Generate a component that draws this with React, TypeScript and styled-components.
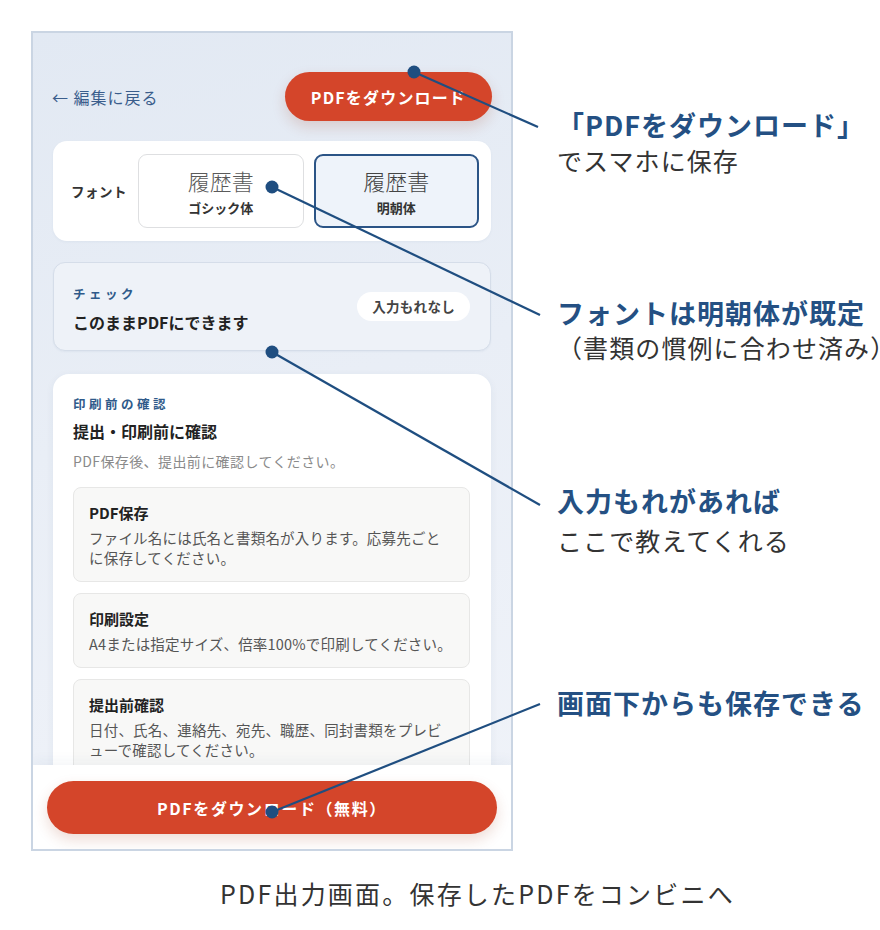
import React from 'react';
import styled, { createGlobalStyle } from 'styled-components';

const GlobalStyle = createGlobalStyle`
  body {
    margin: 0;
    background: #fff;
    font-family: 'Noto Sans CJK JP', 'Noto Sans', sans-serif;
  }
  * {
    box-sizing: border-box;
  }
`;

const RED = '#d4452a';
const NAVY = '#1f4e80';

const Page = styled.div`
  position: relative;
  width: 880px;
  height: 930px;
  padding-top: 31px;
  overflow: hidden;
  background: #fff;
`;

const TopRow = styled.div`
  display: flex;
  padding-left: 31px;
  gap: 44px;
`;

const Phone = styled.div`
  flex: none;
  width: 482px;
  height: 820px;
  border: 2px solid #cad5e3;
  display: flex;
  flex-direction: column;
  overflow: hidden;
  background: linear-gradient(165deg, #e2e9f3 0%, #e9eef6 45%, #f0f3f9 100%);
`;

const Scroll = styled.div`
  flex: 1;
  overflow: hidden;
  padding: 39px 20px 0;
`;

const Header = styled.div`
  display: flex;
  align-items: center;
  justify-content: space-between;
  height: 49px;
  margin-bottom: 20px;
`;

const BackLink = styled.a`
  color: #3a5d8c;
  font-size: 16px;
  letter-spacing: 1px;
  text-decoration: none;
  margin-left: -1px;
`;

const PillButton = styled.button<{ $wide?: boolean }>`
  border: none;
  border-radius: 999px;
  background: ${RED};
  color: #fff;
  font-family: inherit;
  font-weight: 700;
  font-size: 16px;
  letter-spacing: ${(p) => (p.$wide ? '1.6px' : '1.2px')};
  height: ${(p) => (p.$wide ? '53px' : '49px')};
  width: ${(p) => (p.$wide ? '100%' : '207px')};
  margin-right: ${(p) => (p.$wide ? '0' : '-1px')};
  box-shadow: 0 6px 14px rgba(160, 60, 30, 0.18);
`;

const FontCard = styled.div`
  display: grid;
  grid-template-columns: auto 1fr 1fr;
  align-items: center;
  column-gap: 10px;
  background: #fff;
  border-radius: 14px;
  padding: 13px 12px 13px 18px;
  margin-bottom: 21px;
  box-shadow: 0 1px 3px rgba(40, 70, 110, 0.05);
`;

const FontLabel = styled.span`
  font-size: 13.5px;
  font-weight: 700;
  color: #333;
  margin-right: 1px;
  letter-spacing: 0.5px;
`;

const FontOption = styled.div<{ $active?: boolean }>`
  height: 74px;
  border-radius: 9px;
  border: ${(p) => (p.$active ? `2px solid #2b5486` : '1px solid #dedfe1')};
  background: ${(p) => (p.$active ? '#eef3fa' : '#fff')};
  display: flex;
  flex-direction: column;
  align-items: center;
  padding-top: ${(p) => (p.$active ? '10px' : '11px')};
  gap: 5px;
`;

const Sample = styled.span<{ $active?: boolean }>`
  font-size: 22px;
  font-weight: 300;
  line-height: 28px;
  color: ${(p) => (p.$active ? '#444' : '#5a5a5a')};
`;

const SampleName = styled.span`
  font-size: 13px;
  font-weight: 700;
  color: #333;
  line-height: 18px;
`;

const CheckCard = styled.div`
  display: flex;
  align-items: center;
  justify-content: space-between;
  height: 89px;
  padding: 0 20px 0 19px;
  border: 1px solid #d5dde9;
  border-radius: 12px;
  background: #eef2f8;
  margin-bottom: 23px;
  box-shadow: 0 1px 2px rgba(40, 70, 110, 0.05);
`;

const CheckText = styled.div`
  padding-top: 6px;
`;

const Eyebrow = styled.div`
  font-size: 12.5px;
  font-weight: 700;
  letter-spacing: 3.5px;
  color: #2f5a8a;
  line-height: 16px;
`;

const CheckTitle = styled.div`
  font-size: 16px;
  font-weight: 700;
  color: #222;
  line-height: 22px;
  margin-top: 9px;
`;

const Badge = styled.span`
  background: #fff;
  border-radius: 999px;
  padding: 0 15px;
  height: 29px;
  line-height: 29px;
  font-size: 13.5px;
  font-weight: 700;
  color: #444;
  letter-spacing: 0.3px;
`;

const ConfirmCard = styled.div`
  background: #fff;
  border-radius: 16px;
  padding: 22px 21px 24px 20px;
  box-shadow: 0 2px 8px rgba(40, 70, 110, 0.06);
`;

const ConfirmTitle = styled.div`
  font-size: 16px;
  font-weight: 700;
  color: #222;
  line-height: 24px;
  margin-top: 7px;
`;

const ConfirmDesc = styled.div`
  font-size: 14px;
  letter-spacing: 0.4px;
  color: #8a8a8a;
  line-height: 20px;
  margin: 8px 0 16px;
`;

const ItemList = styled.div`
  display: flex;
  flex-direction: column;
  gap: 11px;
`;

const Item = styled.div`
  background: #f8f8f7;
  border: 1px solid #e7e7e6;
  border-radius: 8px;
  padding: 15px 15px 13px;
`;

const ItemTitle = styled.div`
  font-size: 15px;
  font-weight: 700;
  color: #222;
  line-height: 20px;
`;

const ItemDesc = styled.div`
  font-size: 14.5px;
  letter-spacing: 0.2px;
  color: #555;
  line-height: 20px;
  margin-top: 5px;
`;

const Footer = styled.div`
  height: 84px;
  background: #fff;
  padding: 16px 14px 15px;
  box-shadow: 0 -4px 12px rgba(40, 70, 110, 0.05);
  position: relative;
`;

const Notes = styled.div`
  display: flex;
  flex-direction: column;
  white-space: nowrap;
`;

const Note = styled.div<{ $top: number }>`
  margin-top: ${(p) => p.$top}px;
`;

const NoteTitle = styled.div`
  font-size: 27px;
  font-weight: 700;
  line-height: 34px;
  color: #245083;
  letter-spacing: 1px;
`;

const NoteSub = styled.div<{ $gap: number }>`
  font-size: 25px;
  line-height: 32px;
  color: #333;
  letter-spacing: 1.1px;
  margin-top: ${(p) => p.$gap}px;
`;

const Caption = styled.div`
  margin-top: 25px;
  padding-left: 220px;
  font-size: 25px;
  line-height: 34px;
  color: #333;
  letter-spacing: 2.2px;
`;

const Overlay = styled.svg`
  position: absolute;
  inset: 0;
  pointer-events: none;
`;

const leaders = [
  { from: [414, 72], to: [538, 127] },
  { from: [272, 187], to: [540, 315] },
  { from: [272, 352], to: [540, 505] },
  { from: [272, 812], to: [540, 704] },
];

const items = [
  {
    title: 'PDF保存',
    desc: 'ファイル名には氏名と書類名が入ります。応募先ごとに保存してください。',
  },
  { title: '印刷設定', desc: 'A4または指定サイズ、倍率100%で印刷してください。' },
  {
    title: '提出前確認',
    desc: '日付、氏名、連絡先、宛先、職歴、同封書類をプレビューで確認してください。',
  },
];

export default function App() {
  return (
    <Page>
      <GlobalStyle />
      <TopRow>
        <Phone>
          <Scroll>
            <Header>
              <BackLink>← 編集に戻る</BackLink>
              <PillButton>PDFをダウンロード</PillButton>
            </Header>

            <FontCard>
              <FontLabel>フォント</FontLabel>
              <FontOption>
                <Sample>履歴書</Sample>
                <SampleName>ゴシック体</SampleName>
              </FontOption>
              <FontOption $active>
                <Sample $active>履歴書</Sample>
                <SampleName>明朝体</SampleName>
              </FontOption>
            </FontCard>

            <CheckCard>
              <CheckText>
                <Eyebrow>チェック</Eyebrow>
                <CheckTitle>このままPDFにできます</CheckTitle>
              </CheckText>
              <Badge>入力もれなし</Badge>
            </CheckCard>

            <ConfirmCard>
              <Eyebrow>印刷前の確認</Eyebrow>
              <ConfirmTitle>提出・印刷前に確認</ConfirmTitle>
              <ConfirmDesc>PDF保存後、提出前に確認してください。</ConfirmDesc>
              <ItemList>
                {items.map((it) => (
                  <Item key={it.title}>
                    <ItemTitle>{it.title}</ItemTitle>
                    <ItemDesc>{it.desc}</ItemDesc>
                  </Item>
                ))}
              </ItemList>
            </ConfirmCard>
          </Scroll>
          <Footer>
            <PillButton $wide>PDFをダウンロード（無料）</PillButton>
          </Footer>
        </Phone>

        <Notes>
          <Note $top={77}>
            <NoteTitle>「PDFをダウンロード」</NoteTitle>
            <NoteSub $gap={2}>でスマホに保存</NoteSub>
          </Note>
          <Note $top={120}>
            <NoteTitle>フォントは明朝体が既定</NoteTitle>
            <NoteSub $gap={1}>（書類の慣例に合わせ済み）</NoteSub>
          </Note>
          <Note $top={121}>
            <NoteTitle>入力もれがあれば</NoteTitle>
            <NoteSub $gap={6}>ここで教えてくれる</NoteSub>
          </Note>
          <Note $top={130}>
            <NoteTitle>画面下からも保存できる</NoteTitle>
          </Note>
        </Notes>
      </TopRow>

      <Caption>PDF出力画面。保存したPDFをコンビニへ</Caption>

      <Overlay width="880" height="930" viewBox="0 0 880 930">
        {leaders.map((l, i) => (
          <g key={i}>
            <line
              x1={l.from[0]}
              y1={l.from[1]}
              x2={l.to[0]}
              y2={l.to[1]}
              stroke={NAVY}
              strokeWidth={2.2}
            />
            <circle cx={l.from[0]} cy={l.from[1]} r={6.5} fill={NAVY} />
          </g>
        ))}
      </Overlay>
    </Page>
  );
}
